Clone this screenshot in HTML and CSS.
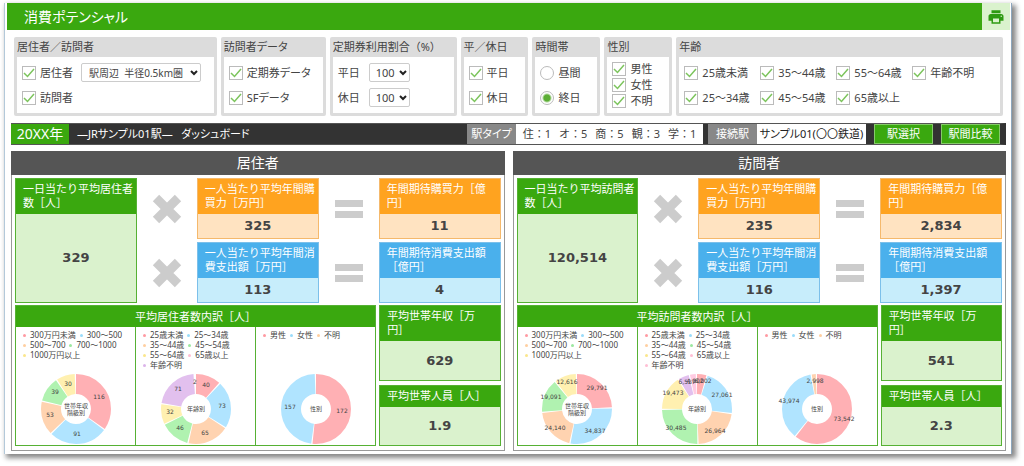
FILE: index.html
```html
<!DOCTYPE html>
<html lang="ja">
<head>
<meta charset="utf-8">
<title>消費ポテンシャル</title>
<link rel="stylesheet" href="styles.css">
</head>
<body>
<div class="window">
  <header class="topbar">
    <h1 class="topbar-title">消費ポテンシャル</h1>
    <button class="print" type="button" aria-label="印刷">
      <svg width="18" height="18" viewBox="0 0 24 24"><path fill="#2e9a12" d="M19 8H5c-1.660 0-3 1.340-3 3v6h4v4h12v-4h4v-6c0-1.660-1.340-3-3-3zm-3 11H8v-5h8v5zm3-7c-.550 0-1-.450-1-1s.450-1 1-1 1 .450 1 1-.450 1-1 1zm-1-9H6v4h12V3z"/></svg>
    </button>
  </header>

  <form class="filters">
    <fieldset class="filter filter-target">
      <h2 class="filter-title">居住者／訪問者</h2>
      <div class="filter-box">
        <div class="row">
          <label class="option"><input class="check" type="checkbox" checked>居住者</label>
          <span class="select-wrap">
            <select class="select select-area" aria-label="範囲"><option>駅周辺&nbsp; 半径0.5km圏</option></select>
            <svg class="chevron" width="8" height="6" viewBox="0 0 8 6"><path d="M1 1l3 3 3-3" fill="none" stroke="#222" stroke-width="2"/></svg>
          </span>
        </div>
        <div class="row"><label class="option"><input class="check" type="checkbox" checked>訪問者</label></div>
      </div>
    </fieldset>
    <fieldset class="filter filter-data">
      <h2 class="filter-title">訪問者データ</h2>
      <div class="filter-box">
        <div class="row"><label class="option"><input class="check" type="checkbox" checked>定期券データ</label></div>
        <div class="row"><label class="option"><input class="check" type="checkbox" checked>SFデータ</label></div>
      </div>
    </fieldset>
    <fieldset class="filter filter-rate">
      <h2 class="filter-title filter-title-wide">定期券利用割合（%）</h2>
      <div class="filter-box">
        <div class="row">
          <label class="rate-label" for="rate-weekday">平日</label>
          <span class="select-wrap">
            <select class="select select-rate" id="rate-weekday"><option>100</option></select>
            <svg class="chevron" width="8" height="6" viewBox="0 0 8 6"><path d="M1 1l3 3 3-3" fill="none" stroke="#222" stroke-width="2"/></svg>
          </span>
        </div>
        <div class="row">
          <label class="rate-label" for="rate-holiday">休日</label>
          <span class="select-wrap">
            <select class="select select-rate" id="rate-holiday"><option>100</option></select>
            <svg class="chevron" width="8" height="6" viewBox="0 0 8 6"><path d="M1 1l3 3 3-3" fill="none" stroke="#222" stroke-width="2"/></svg>
          </span>
        </div>
      </div>
    </fieldset>
    <fieldset class="filter filter-small">
      <h2 class="filter-title">平／休日</h2>
      <div class="filter-box">
        <div class="row"><label class="option"><input class="check" type="checkbox" checked>平日</label></div>
        <div class="row"><label class="option"><input class="check" type="checkbox" checked>休日</label></div>
      </div>
    </fieldset>
    <fieldset class="filter filter-small">
      <h2 class="filter-title">時間帯</h2>
      <div class="filter-box">
        <div class="row"><label class="option"><input class="radio" type="radio" name="time">昼間</label></div>
        <div class="row"><label class="option"><input class="radio" type="radio" name="time" checked>終日</label></div>
      </div>
    </fieldset>
    <fieldset class="filter filter-small">
      <h2 class="filter-title">性別</h2>
      <div class="filter-box filter-box-dense">
        <div class="row"><label class="option"><input class="check" type="checkbox" checked>男性</label></div>
        <div class="row"><label class="option"><input class="check" type="checkbox" checked>女性</label></div>
        <div class="row"><label class="option"><input class="check" type="checkbox" checked>不明</label></div>
      </div>
    </fieldset>
    <fieldset class="filter filter-age">
      <h2 class="filter-title">年齢</h2>
      <div class="filter-box">
        <div class="row ages">
          <label class="option"><input class="check" type="checkbox" checked>25歳未満</label>
          <label class="option"><input class="check" type="checkbox" checked>35～44歳</label>
          <label class="option"><input class="check" type="checkbox" checked>55～64歳</label>
          <label class="option"><input class="check" type="checkbox" checked>年齢不明</label>
        </div>
        <div class="row ages">
          <label class="option"><input class="check" type="checkbox" checked>25～34歳</label>
          <label class="option"><input class="check" type="checkbox" checked>45～54歳</label>
          <label class="option"><input class="check" type="checkbox" checked>65歳以上</label>
        </div>
      </div>
    </fieldset>
  </form>

  <div class="station">
    <span class="station-year">20XX年</span>
    <span class="station-name">―JRサンプル01駅―&nbsp;&nbsp; ダッシュボード</span>
    <span class="tag">駅タイプ</span>
    <span class="tag-value tag-types"><span>住：1</span><span>オ：5</span><span>商：5</span><span>観：3</span><span>学：1</span></span>
    <span class="tag tag-next">接続駅</span>
    <span class="tag-value tag-line">サンプル01(〇〇鉄道)</span>
    <button class="button" type="button">駅選択</button>
    <button class="button" type="button">駅間比較</button>
  </div>

  <main class="panels">
    <section class="panel">
      <h2 class="panel-title">居住者</h2>
      <div class="panel-body">
        <div class="formula">
          <div class="card green tall"><h3 class="card-head">一日当たり平均居住者<br>数［人］</h3><p class="card-value">329</p></div>
          <svg class="sign" width="30" height="30" viewBox="0 0 30 30"><path d="M4 4l22 22M26 4L4 26" stroke="#ccc" stroke-width="9"/></svg>
          <div class="card orange"><h3 class="card-head">一人当たり平均年間購<br>買力［万円］</h3><p class="card-value">325</p></div>
          <svg class="sign" width="30" height="30" viewBox="0 0 30 30"><path d="M1 9.500h28M1 20.500h28" stroke="#ccc" stroke-width="7"/></svg>
          <div class="card orange"><h3 class="card-head">年間期待購買力［億<br>円］</h3><p class="card-value">11</p></div>
          <svg class="sign" width="30" height="30" viewBox="0 0 30 30"><path d="M4 4l22 22M26 4L4 26" stroke="#ccc" stroke-width="9"/></svg>
          <div class="card blue"><h3 class="card-head">一人当たり平均年間消<br>費支出額［万円］</h3><p class="card-value">113</p></div>
          <svg class="sign" width="30" height="30" viewBox="0 0 30 30"><path d="M1 9.500h28M1 20.500h28" stroke="#ccc" stroke-width="7"/></svg>
          <div class="card blue"><h3 class="card-head">年間期待消費支出額<br>［億円］</h3><p class="card-value">4</p></div>
        </div>
        <div class="details">
          <div class="breakdown">
            <h3 class="breakdown-title">平均居住者数内訳［人］</h3>
            <div class="charts">
              <div class="chart">
                <ul class="legend"><li class="pink">300万円未満</li><li class="sky">300～500</li><li class="peach">500～700</li><li class="mint">700～1000</li><li class="lemon">1000万円以上</li></ul>
                <svg class="donut" width="96" height="72" viewBox="0 0 96 72">
                  <g transform="rotate(-90 48 36)">
                    <circle class="s-pink" cx="48" cy="36" r="25" pathLength="329" stroke-dasharray="114 215"/>
                    <circle class="s-sky" cx="48" cy="36" r="25" pathLength="329" stroke-dasharray="89 240" stroke-dashoffset="-116"/>
                    <circle class="s-peach" cx="48" cy="36" r="25" pathLength="329" stroke-dasharray="51 278" stroke-dashoffset="-207"/>
                    <circle class="s-mint" cx="48" cy="36" r="25" pathLength="329" stroke-dasharray="37 292" stroke-dashoffset="-260"/>
                    <circle class="s-lemon" cx="48" cy="36" r="25" pathLength="329" stroke-dasharray="28 301" stroke-dashoffset="-299"/>
                  </g>
                  <text x="71" y="26">116</text><text x="49" y="63">91</text><text x="22" y="44">53</text><text x="27" y="21">39</text><text x="40" y="13">30</text>
                  <text class="name" x="48" y="35">世帯年収</text><text class="name" x="48" y="42">階級別</text>
                </svg>
              </div>
              <div class="chart">
                <ul class="legend"><li class="pink">25歳未満</li><li class="sky">25～34歳</li><li class="peach">35～44歳</li><li class="mint">45～54歳</li><li class="lemon">55～64歳</li><li class="rose">65歳以上</li><li class="lilac">年齢不明</li></ul>
                <svg class="donut" width="96" height="72" viewBox="0 0 96 72">
                  <g transform="rotate(-90 48 36)">
                    <circle class="s-pink" cx="48" cy="36" r="25" pathLength="329" stroke-dasharray="38 291"/>
                    <circle class="s-sky" cx="48" cy="36" r="25" pathLength="329" stroke-dasharray="71 258" stroke-dashoffset="-40"/>
                    <circle class="s-peach" cx="48" cy="36" r="25" pathLength="329" stroke-dasharray="63 266" stroke-dashoffset="-113"/>
                    <circle class="s-mint" cx="48" cy="36" r="25" pathLength="329" stroke-dasharray="44 285" stroke-dashoffset="-178"/>
                    <circle class="s-lemon" cx="48" cy="36" r="25" pathLength="329" stroke-dasharray="30 299" stroke-dashoffset="-224"/>
                    <circle class="s-lilac" cx="48" cy="36" r="25" pathLength="329" stroke-dasharray="69 260" stroke-dashoffset="-256"/>
                  </g>
                  <text x="58" y="14">40</text><text x="74" y="35">73</text><text x="57" y="62">65</text><text x="32" y="57">46</text><text x="22" y="41">32</text><text x="30" y="18">71</text><text x="47" y="11">2</text>
                  <text class="name" x="48" y="38">年齢別</text>
                </svg>
              </div>
              <div class="chart">
                <ul class="legend"><li class="pink">男性</li><li class="sky">女性</li><li class="peach">不明</li></ul>
                <svg class="donut" width="96" height="72" viewBox="0 0 96 72">
                  <g transform="rotate(-90 48 36)">
                    <circle class="s-pink" cx="48" cy="36" r="25" pathLength="329" stroke-dasharray="170 159"/>
                    <circle class="s-sky" cx="48" cy="36" r="25" pathLength="329" stroke-dasharray="155 174" stroke-dashoffset="-172"/>
                  </g>
                  <text x="74" y="40">172</text><text x="22" y="36">157</text>
                  <text class="name" x="48" y="38">性別</text>
                </svg>
              </div>
            </div>
          </div>
          <div class="side">
            <div class="card green side-main"><h3 class="card-head">平均世帯年収［万<br>円］</h3><p class="card-value">629</p></div>
            <div class="card green side-sub"><h3 class="card-head">平均世帯人員［人］</h3><p class="card-value">1.9</p></div>
          </div>
        </div>
      </div>
    </section>

    <section class="panel">
      <h2 class="panel-title">訪問者</h2>
      <div class="panel-body">
        <div class="formula">
          <div class="card green tall"><h3 class="card-head">一日当たり平均訪問者<br>数［人］</h3><p class="card-value">120,514</p></div>
          <svg class="sign" width="30" height="30" viewBox="0 0 30 30"><path d="M4 4l22 22M26 4L4 26" stroke="#ccc" stroke-width="9"/></svg>
          <div class="card orange"><h3 class="card-head">一人当たり平均年間購<br>買力［万円］</h3><p class="card-value">235</p></div>
          <svg class="sign" width="30" height="30" viewBox="0 0 30 30"><path d="M1 9.500h28M1 20.500h28" stroke="#ccc" stroke-width="7"/></svg>
          <div class="card orange"><h3 class="card-head">年間期待購買力［億<br>円］</h3><p class="card-value">2,834</p></div>
          <svg class="sign" width="30" height="30" viewBox="0 0 30 30"><path d="M4 4l22 22M26 4L4 26" stroke="#ccc" stroke-width="9"/></svg>
          <div class="card blue"><h3 class="card-head">一人当たり平均年間消<br>費支出額［万円］</h3><p class="card-value">116</p></div>
          <svg class="sign" width="30" height="30" viewBox="0 0 30 30"><path d="M1 9.500h28M1 20.500h28" stroke="#ccc" stroke-width="7"/></svg>
          <div class="card blue"><h3 class="card-head">年間期待消費支出額<br>［億円］</h3><p class="card-value">1,397</p></div>
        </div>
        <div class="details">
          <div class="breakdown">
            <h3 class="breakdown-title">平均訪問者数内訳［人］</h3>
            <div class="charts">
              <div class="chart">
                <ul class="legend"><li class="pink">300万円未満</li><li class="sky">300～500</li><li class="peach">500～700</li><li class="mint">700～1000</li><li class="lemon">1000万円以上</li></ul>
                <svg class="donut" width="96" height="72" viewBox="0 0 96 72">
                  <g transform="rotate(-90 48 36)">
                    <circle class="s-pink" cx="48" cy="36" r="25" pathLength="120475" stroke-dasharray="29091 91384"/>
                    <circle class="s-sky" cx="48" cy="36" r="25" pathLength="120475" stroke-dasharray="34137 86338" stroke-dashoffset="-29791"/>
                    <circle class="s-peach" cx="48" cy="36" r="25" pathLength="120475" stroke-dasharray="23440 97035" stroke-dashoffset="-64628"/>
                    <circle class="s-mint" cx="48" cy="36" r="25" pathLength="120475" stroke-dasharray="18391 102084" stroke-dashoffset="-88768"/>
                    <circle class="s-lemon" cx="48" cy="36" r="25" pathLength="120475" stroke-dasharray="11916 108559" stroke-dashoffset="-107859"/>
                  </g>
                  <text x="68" y="17">29,791</text><text x="66" y="60">34,837</text><text x="26" y="57">24,140</text><text x="22" y="26">19,091</text><text x="38" y="11">12,616</text>
                  <text class="name" x="48" y="35">世帯年収</text><text class="name" x="48" y="42">階級別</text>
                </svg>
              </div>
              <div class="chart">
                <ul class="legend"><li class="pink">25歳未満</li><li class="sky">25～34歳</li><li class="peach">35～44歳</li><li class="mint">45～54歳</li><li class="lemon">55～64歳</li><li class="rose">65歳以上</li><li class="rose">年齢不明</li></ul>
                <svg class="donut" width="96" height="72" viewBox="0 0 96 72">
                  <g transform="rotate(-90 48 36)">
                    <circle class="s-pink" cx="48" cy="36" r="25" pathLength="120514" stroke-dasharray="5302 115212"/>
                    <circle class="s-sky" cx="48" cy="36" r="25" pathLength="120514" stroke-dasharray="26361 94153" stroke-dashoffset="-6002"/>
                    <circle class="s-peach" cx="48" cy="36" r="25" pathLength="120514" stroke-dasharray="26264 94250" stroke-dashoffset="-33063"/>
                    <circle class="s-mint" cx="48" cy="36" r="25" pathLength="120514" stroke-dasharray="29785 90729" stroke-dashoffset="-60027"/>
                    <circle class="s-lemon" cx="48" cy="36" r="25" pathLength="120514" stroke-dasharray="18773 101741" stroke-dashoffset="-90512"/>
                    <circle class="s-lilac" cx="48" cy="36" r="25" pathLength="120514" stroke-dasharray="5827 114687" stroke-dashoffset="-109985"/>
                    <circle class="s-rose" cx="48" cy="36" r="25" pathLength="120514" stroke-dasharray="3302 117212" stroke-dashoffset="-116512"/>
                  </g>
                  <text x="38" y="11">6,527</text><text x="46" y="10">4,002</text><text x="54" y="10">6,002</text><text x="73" y="24">27,061</text><text x="66" y="60">26,964</text><text x="27" y="57">30,485</text><text x="24" y="22">19,473</text>
                  <text class="name" x="48" y="38">年齢別</text>
                </svg>
              </div>
              <div class="chart">
                <ul class="legend"><li class="pink">男性</li><li class="sky">女性</li><li class="peach">不明</li></ul>
                <svg class="donut" width="96" height="72" viewBox="0 0 96 72">
                  <g transform="rotate(-90 48 36)">
                    <circle class="s-pink" cx="48" cy="36" r="25" pathLength="120514" stroke-dasharray="72842 47672"/>
                    <circle class="s-sky" cx="48" cy="36" r="25" pathLength="120514" stroke-dasharray="43274 77240" stroke-dashoffset="-73542"/>
                    <circle class="s-peach" cx="48" cy="36" r="25" pathLength="120514" stroke-dasharray="2298 118216" stroke-dashoffset="-117516"/>
                  </g>
                  <text x="75" y="48">73,542</text><text x="20" y="30">43,974</text><text x="46" y="10">2,998</text>
                  <text class="name" x="48" y="38">性別</text>
                </svg>
              </div>
            </div>
          </div>
          <div class="side">
            <div class="card green side-main"><h3 class="card-head">平均世帯年収［万<br>円］</h3><p class="card-value">541</p></div>
            <div class="card green side-sub"><h3 class="card-head">平均世帯人員［人］</h3><p class="card-value">2.3</p></div>
          </div>
        </div>
      </div>
    </section>
  </main>
</div>
</body>
</html>
```
FILE: styles.css
```css
* { box-sizing: border-box; }
body {
  margin: 0;
  padding: 3px 12px 11px 4px;
  background: #fff;
  color: #444;
  font: 11px/14px "Noto Sans", "Noto Sans CJK JP", sans-serif;
}
h1, h2, h3, p, ul { margin: 0; padding: 0; font-weight: 400; }
button, select, input { font: inherit; color: inherit; margin: 0; }

.window {
  padding: 0 1px 3px 2px;
  border-left: 1px solid #b3c9da;
  border-right: 1px solid #8ca6bd;
  box-shadow: 3px 3px 5px 1px #888;
  background: #fff;
}

.topbar { display: flex; height: 27px; background: #3aa80f; color: #fff; }
.topbar-title {
  flex: 1;
  padding-left: 17px;
  font-size: 14px;
  line-height: 27px;
  font-feature-settings: "palt";
}
.print {
  display: flex;
  align-items: center;
  justify-content: center;
  width: 28px;
  padding: 0;
  border: 0;
  background: #daf2cd;
}

.filters { display: flex; gap: 4px; padding: 7px 7px 0; }
.filter {
  min-width: 0;
  margin: 0;
  padding: 0 3px 3px;
  border: 0;
  border-radius: 2px;
  background: #dcdcdc;
}
.filter-target { flex: 203 1 203px; }
.filter-data { flex: 105 1 105px; }
.filter-rate { flex: 127 1 127px; }
.filter-small { flex: 68 1 68px; }
.filter-age { flex: 327 1 327px; }
.filter-title { font-size: 11px; line-height: 20px; white-space: nowrap; font-feature-settings: "palt"; }
.filter-title-wide { font-feature-settings: normal; }
.filter-box {
  display: flex;
  flex-direction: column;
  justify-content: center;
  gap: 5px;
  height: 56px;
  padding: 0 5px;
  background: #fff;
}
.filter-box-dense { gap: 0; }
.filter-box-dense .row { height: 16px; }
.row { display: flex; align-items: center; height: 20px; gap: 8px; white-space: nowrap; }
.ages { display: grid; grid-template-columns: repeat(4, 76px); gap: 0; }
.option { display: flex; align-items: center; gap: 4px; font-feature-settings: "palt"; }
.check, .radio {
  appearance: none;
  flex: none;
  width: 14px;
  height: 14px;
  border: 1px solid #bbb;
  background: #fff;
}
.check:checked {
  background: url("data:image/svg+xml,%3Csvg xmlns='http://www.w3.org/2000/svg' viewBox='0 0 12 12'%3E%3Cpath d='M1 6l3.500 3.500L11 2' fill='none' stroke='%237cc45c' stroke-width='1.500'/%3E%3C/svg%3E") center / 12px 12px no-repeat;
}
.radio { border-radius: 50%; }
.radio:checked { background: radial-gradient(circle, #5cae35 3px, #fff 5px); }
.rate-label { width: 23px; }
.select-wrap { position: relative; display: flex; }
.select {
  appearance: none;
  height: 19px;
  padding: 0 6px;
  border: 1px solid #ccc;
  border-radius: 2px;
  background: #fff;
  font-size: 10px;
}
.select-area { width: 120px; padding-left: 7px; }
.select-rate { width: 41px; font-size: 11px; }
.chevron { position: absolute; right: 3px; top: 7px; pointer-events: none; }

.station {
  display: flex;
  align-items: stretch;
  height: 22px;
  margin: 7px 4px 0;
  border: 1px solid #555;
  border-width: 1px 6px 1px 0;
  border-color: #555 #333;
  background: #333;
  line-height: 20px;
  white-space: nowrap;
}
.station-year { width: 58px; background: #3aa80f; color: #fff; font-size: 14px; text-align: center; }
.station-name { flex: 1; padding-left: 8px; color: #fff; font-size: 11px; font-feature-settings: "palt"; }
.tag { width: 49px; background: #888; color: #fff; text-align: center; font-feature-settings: "palt"; }
.tag-next { margin-left: 5px; }
.tag-value { background: #fff; text-align: center; }
.tag-types { display: flex; justify-content: center; gap: 8px; width: 187px; }
.tag-line { width: 109px; color: #222; font-feature-settings: "palt"; }
.button {
  width: 59px;
  margin-left: 8px;
  padding: 0;
  border: 1px solid #85cb69;
  background: #3aa80f;
  color: #fff;
  line-height: 16px;
}

.panels { display: flex; gap: 8px; margin: 6px 4px 0; }
.panel { flex: 1; border: 1px solid #999; background: #fff; }
.panel-title {
  margin: -1px;
  background: #555;
  color: #fff;
  font-size: 14px;
  line-height: 24px;
  text-align: center;
}
.panel-body { padding: 4px 3px; }
.formula {
  display: grid;
  grid-template-columns: 1fr 60px 1fr 60px 1fr;
  grid-template-rows: 61px 61px;
  gap: 3px 0;
}
.sign { place-self: center; }
.card { display: flex; flex-direction: column; border: 1px solid; }
.tall { grid-row: span 2; }
.card-head {
  padding: 3px 0 4px 7px;
  color: #fff;
  font-size: 11px;
  line-height: 14px;
  white-space: nowrap;
}
.card-value {
  display: flex;
  flex: 1;
  align-items: center;
  justify-content: center;
  font: 700 13px/16px "DejaVu Sans", sans-serif;
}
.green { border-color: #56b134; background: #daf2cd; }
.green .card-head { background: #3aa80f; }
.orange { border-color: #f5b96c; background: #ffe3c1; }
.orange .card-head { background: #ffa31f; }
.blue { border-color: #7cc0ea; background: #c7edfb; }
.blue .card-head { background: #4ab0ec; }

.details { display: flex; gap: 3px; margin-top: 2px; }
.breakdown { display: flex; flex: 361 0 0; flex-direction: column; border: 1px solid #56b134; }
.breakdown-title { background: #3aa80f; color: #fff; font-size: 11px; line-height: 21px; text-align: center; }
.charts { display: flex; flex: 1; }
.chart {
  display: flex;
  flex: 1 0 0;
  flex-direction: column;
  justify-content: space-between;
  min-width: 0;
}
.chart + .chart { border-left: 1px solid #56b134; }
.legend {
  display: flex;
  flex-wrap: wrap;
  column-gap: 4px;
  padding: 3px 0 0 7px;
  font-size: 8px;
  line-height: 10px;
  list-style: none;
  white-space: nowrap;
}
.legend li { --dot: #ff9aa2; display: flex; align-items: center; gap: 4px; }
.legend li::before { content: ""; width: 3px; height: 3px; border-radius: 50%; background: var(--dot); }
.legend .sky { --dot: #9adcfa; }
.legend .peach { --dot: #ffcfa0; }
.legend .mint { --dot: #9ce8a0; }
.legend .lemon { --dot: #fbe68c; }
.legend .lilac { --dot: #dcb4ea; }
.legend .rose { --dot: #ffbfd4; }
.donut { align-self: center; }
.donut circle { fill: none; stroke-width: 20; }
.donut text { fill: #444; font: 6px "DejaVu Sans", "Noto Sans CJK JP", sans-serif; text-anchor: middle; }
.s-pink { stroke: #ffb0b4; }
.s-sky { stroke: #b0e4ff; }
.s-peach { stroke: #ffd3b0; }
.s-mint { stroke: #b0f2b0; }
.s-lemon { stroke: #fff0b0; }
.s-lilac { stroke: #e2c0ee; }
.s-rose { stroke: #ffcbe2; }
.side { display: flex; flex: 122 0 0; flex-direction: column; gap: 4px; }
.side-main { height: 76px; }
.side-sub { height: 61px; }
```
